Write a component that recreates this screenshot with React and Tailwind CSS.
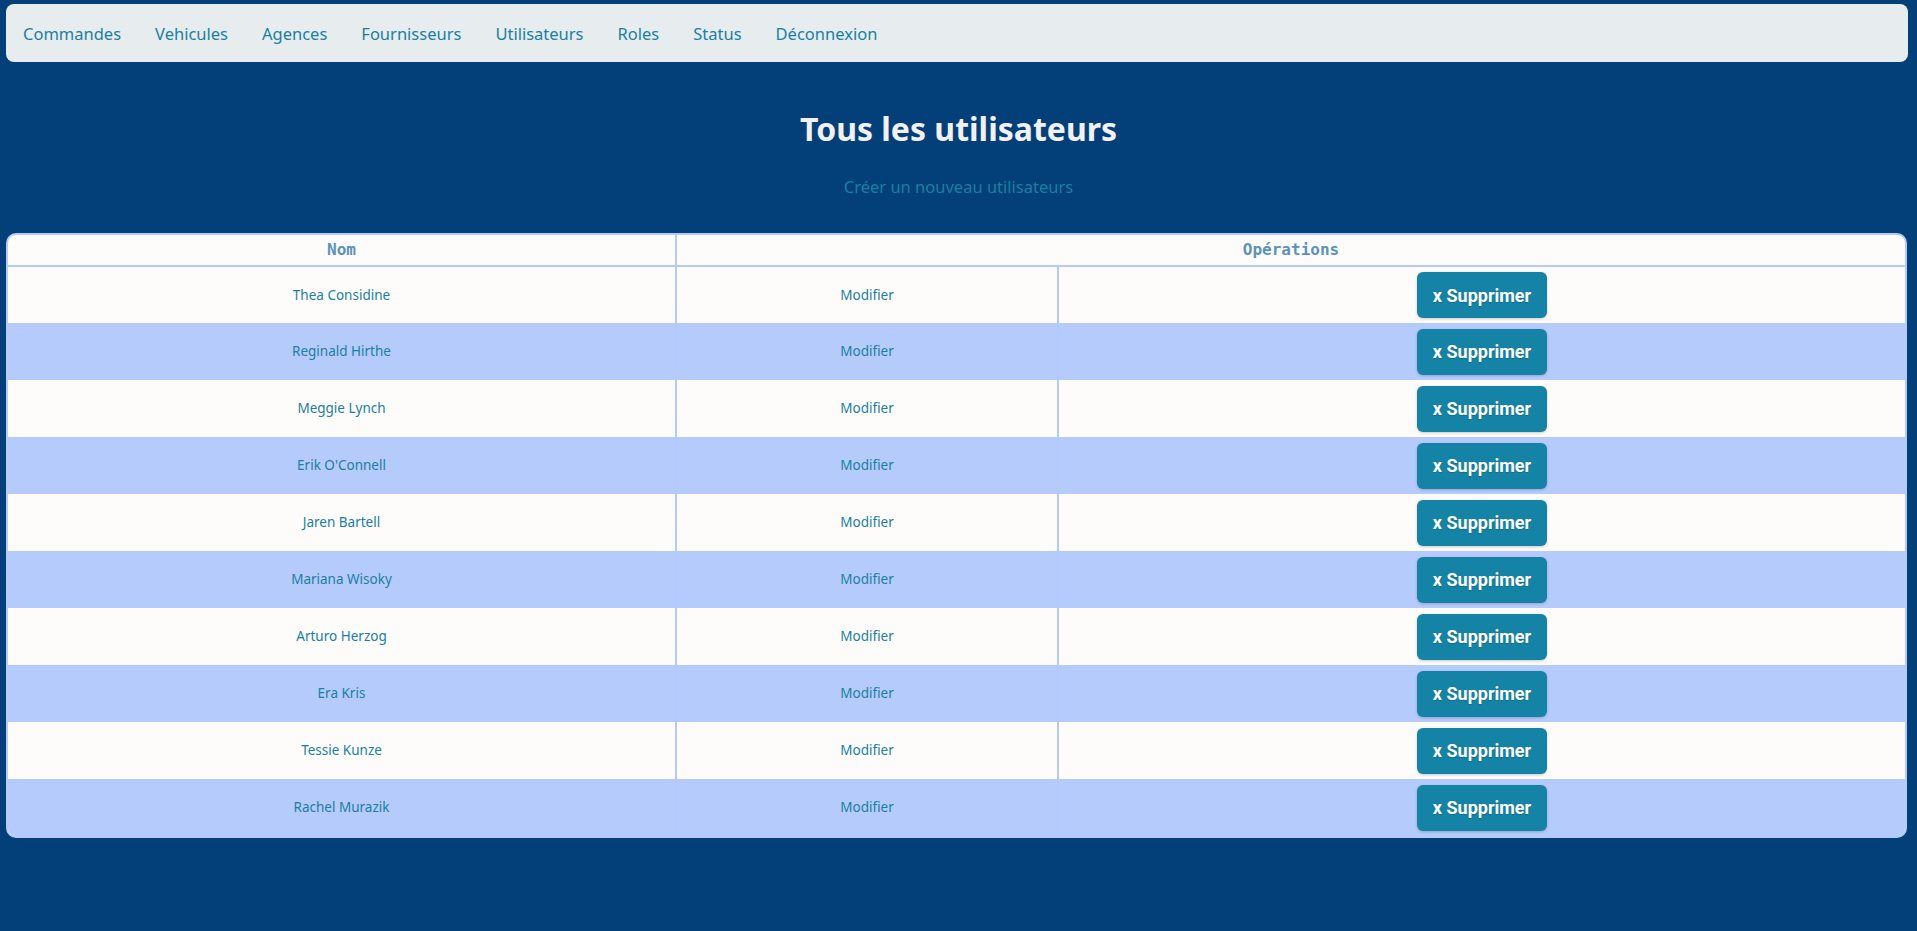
import React from 'react';

const links = ['Commandes', 'Vehicules', 'Agences', 'Fournisseurs', 'Utilisateurs', 'Roles', 'Status', 'Déconnexion'];

const users = [
  'Thea Considine',
  'Reginald Hirthe',
  'Meggie Lynch',
  "Erik O'Connell",
  'Jaren Bartell',
  'Mariana Wisoky',
  'Arturo Herzog',
  'Era Kris',
  'Tessie Kunze',
  'Rachel Murazik',
];

export default function App() {
  return (
    <div className="min-h-[931px] bg-[#033f78] pt-[4px] pb-10 font-['Noto_Sans',sans-serif]">
      {/* top navigation */}
      <nav className="ml-[6px] mr-[9px] h-[58px] rounded-[8px] bg-[#e7ecef] flex items-center pt-[2px] pl-[17px] gap-[34px]">
        {links.map((l) => (
          <a key={l} href="#" className="text-[16.5px] text-[#1a7fa3] leading-none">
            {l}
          </a>
        ))}
      </nav>

      <h1 className="mt-[48px] text-center text-[32px] leading-[38px] font-bold text-[#f1f0f5]">
        Tous les utilisateurs
      </h1>
      <div className="mt-[27px] text-center">
        <a href="#" className="text-[16.5px] leading-[22px] text-[#1a7fa3]">
          Créer un nouveau utilisateurs
        </a>
      </div>

      {/* users table */}
      <div className="mt-[34px] ml-[6px] mr-[10px] rounded-[10px] border-2 border-[#b4cafc] bg-[#fdfcfb] overflow-hidden">
        <table className="w-full table-fixed border-collapse">
          <colgroup>
            <col className="w-[668px]" />
            <col className="w-[382px]" />
            <col />
          </colgroup>
          <thead>
            <tr className="h-[31px]">
              <th className="border-r-2 border-b-2 border-[#b4cafc] font-['DejaVu_Sans_Mono',monospace] text-[16px] font-bold text-[#5b93bd]">
                Nom
              </th>
              <th colSpan={2} className="border-b-2 border-[#b4cafc] font-['DejaVu_Sans_Mono',monospace] text-[16px] font-bold text-[#5b93bd]">
                Opérations
              </th>
            </tr>
          </thead>
          <tbody>
            {users.map((u, i) => (
              <tr key={u} className={`h-[57px] ${i % 2 === 1 ? 'bg-[#b5cbfc]' : 'bg-[#fdfcfb]'}`}>
                <td className="border-r-2 border-[#b4cafc] text-center text-[13.5px] text-[#1a7fa3]">{u}</td>
                <td className="border-r-2 border-[#b4cafc] text-center text-[13.5px] text-[#1a7fa3]">
                  <a href="#">Modifier</a>
                </td>
                <td className="text-center align-middle">
                  <button className="inline-flex items-center justify-center w-[130px] h-[46px] rounded-[6px] bg-[#1583a5] shadow-[0_1px_3px_rgba(0,0,0,0.2)] font-['Roboto',sans-serif] text-[18px] font-bold text-white [text-shadow:0_1px_1px_rgba(0,0,0,0.15)]">
                    x Supprimer
                  </button>
                </td>
              </tr>
            ))}
          </tbody>
        </table>
      </div>
    </div>
  );
}
